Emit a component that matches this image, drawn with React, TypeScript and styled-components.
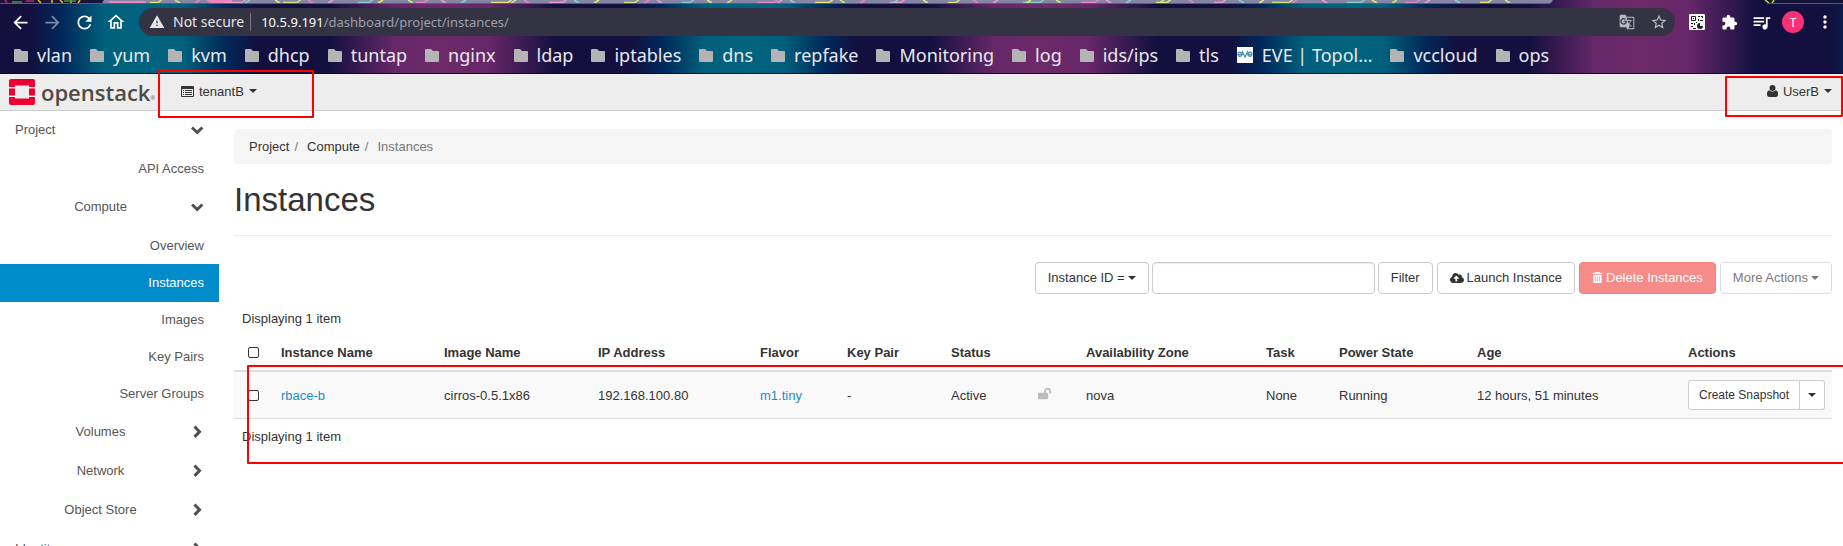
import React from 'react';
import styled, { createGlobalStyle, css } from 'styled-components';
import {
  MdArrowBack,
  MdArrowForward,
  MdRefresh,
  MdOutlineHome,
  MdWarning,
  MdGTranslate,
  MdStarBorder,
  MdExtension,
  MdQueueMusic,
  MdMoreVert,
} from 'react-icons/md';
import { FaTrashAlt, FaLockOpen, FaCloudUploadAlt } from 'react-icons/fa';

const GlobalStyle = createGlobalStyle`
  *, *::before, *::after { box-sizing: border-box; }
  body {
    margin: 0;
    background: #fff;
    color: #333;
    font: 13px/19px "Liberation Sans", Arial, sans-serif;
  }
  a { text-decoration: none; }
  button, input { font: inherit; }
`;

const Window = styled.div`
  display: flex;
  flex-direction: column;
  height: 100vh;
  overflow: hidden;
`;

/* ---------- browser frame ---------- */

const BrowserFrame = styled.div`
  flex: none;
  border-bottom: 1px solid #0c0a2c;
  background: repeating-linear-gradient(
    90deg,
    #13103f 0,
    #13103f 30px,
    #00285a 62px,
    #005f7c 104px,
    #00647f 150px,
    #005f7c 184px,
    #00285a 226px,
    #13103f 258px,
    #13103f 330px,
    #652768 394px,
    #6d2a68 440px,
    #652768 490px,
    #13103f 556px,
    #13103f 600px
  );
  font-family: "Noto Sans", "Open Sans", sans-serif;
`;

const WallpaperStrip = styled.svg`
  display: block;
  width: 100%;
  height: 4px;
`;

const Toolbar = styled.div`
  display: flex;
  align-items: center;
  height: 36px;
  padding: 0 2px 0 10px;
`;

const ToolButton = styled.button<{ $dim?: boolean }>`
  display: flex;
  align-items: center;
  justify-content: center;
  width: 32px;
  height: 28px;
  padding: 0;
  border: 0;
  background: none;
  color: ${(p) => (p.$dim ? '#7b87a8' : '#fff')};
`;

const NavButtons = styled.div`
  display: flex;
  width: 130px;
  margin-left: -6px;
`;

const AddressBar = styled.div`
  display: flex;
  flex: 1;
  align-items: center;
  height: 28px;
  margin-left: 5px;
  padding: 0 0 0 10px;
  border-radius: 14px;
  background: #333344;
  color: #e4e4e8;
`;

const Security = styled.span`
  display: flex;
  align-items: center;
  gap: 8px;
  padding-right: 6px;
  border-right: 1px solid #777785;
  font-size: 14px;
  line-height: 18px;
`;

const Url = styled.span`
  flex: 1;
  padding-left: 10px;
  color: #9f9fa9;
  font-size: 13px;

  b {
    color: #fff;
    font-weight: 400;
  }
`;

const AddressIcon = styled(ToolButton)`
  color: #b9b9c0;
`;

const Extensions = styled.div`
  display: flex;
  align-items: center;
  margin-left: 6px;
`;

const Avatar = styled.span`
  display: flex;
  align-items: center;
  justify-content: center;
  width: 22px;
  height: 22px;
  border-radius: 50%;
  background: #fc3077;
  font-size: 12px;
`;

const Bookmarks = styled.nav`
  display: flex;
  align-items: center;
  gap: 18px;
  height: 33px;
  padding: 0 14px 3px;
`;

const Bookmark = styled.a`
  display: flex;
  align-items: center;
  gap: 9px;
  color: #e9e9ee;
  font-size: 18px;
  line-height: 28px;
  white-space: nowrap;

  svg { flex: none; }
`;

/* ---------- dashboard header ---------- */

const Header = styled.header`
  display: flex;
  flex: none;
  align-items: center;
  height: 37px;
  border-bottom: 1px solid #ccc;
  background: #ededed;
`;

const Brand = styled.a`
  display: flex;
  align-items: center;
  gap: 6px;
  width: 158px;
  padding-left: 9px;
  color: #514b43;
  font: 600 22px/30px "Open Sans", "Noto Sans", sans-serif;
  white-space: nowrap;

  small {
    align-self: flex-end;
    margin-left: -6px;
    font: 6px/18px "Liberation Sans", sans-serif;
  }
`;

const Marked = styled.div`
  position: relative;
  display: flex;
  align-items: center;
  height: 36px;
  padding-bottom: 2px;
`;

const Outline = styled.div`
  position: absolute;
  z-index: 2;
  border: 2px solid #f00;
  border-radius: 1px;
  pointer-events: none;
`;

const TenantOutline = styled(Outline)`
  inset: -4px 0 -8px;
`;

const UserOutline = styled(Outline)`
  inset: 2px 0 -7px;
`;

const RowOutline = styled(Outline)`
  inset: 64px -13px -11px 13px;
`;

const MenuButton = styled.button`
  display: flex;
  align-items: center;
  gap: 5px;
  padding: 0;
  border: 0;
  background: none;
  color: #333;
  line-height: 19px;
`;

const TenantMenu = styled(Marked)`
  width: 156px;
  padding-left: 23px;
`;

const UserMenu = styled(Marked)`
  justify-content: flex-end;
  width: 118px;
  margin-left: auto;
  padding-right: 11px;
`;

const Caret = styled.span`
  display: inline-block;
  border: 4px solid transparent;
  border-top-color: currentColor;
  border-bottom: 0;
  vertical-align: middle;
`;

/* ---------- sidebar ---------- */

const Body = styled.div`
  display: flex;
  flex: 1;
  min-height: 0;
`;

const Sidebar = styled.nav`
  flex: none;
  width: 219px;
  overflow: hidden;
`;

const PanelHeading = styled.a<{ $nested?: boolean }>`
  display: flex;
  align-items: center;
  height: 39px;
  padding: 0 15px 2px;
  color: #555;

  span {
    flex: 1;
    ${(p) =>
      p.$nested &&
      css`
        padding-right: 5px;
        text-align: center;
      `}
  }
`;

const PanelList = styled.div`
  padding-bottom: 1px;
`;

const PanelItem = styled.a<{ $active?: boolean }>`
  display: flex;
  align-items: center;
  justify-content: flex-end;
  height: 37px;
  padding-right: 15px;
  color: #555;

  ${(p) =>
    p.$active &&
    css`
      background: #008bcb;
      box-shadow: 0 1px #008bcb;
      color: #fff;
    `}
`;

/* ---------- main content ---------- */

const Main = styled.main`
  flex: 1;
  min-width: 0;
  padding: 18px 11px 0 15px;
`;

const Breadcrumb = styled.nav`
  display: flex;
  align-items: center;
  height: 35px;
  padding: 0 15px;
  border-radius: 4px;
  background: #f5f5f5;
  color: #777;

  a { color: #333; }
  a::after {
    padding: 0 9px 0 5px;
    color: #777;
    content: "/";
  }
`;

const Title = styled.h1`
  margin: 0;
  padding: 18px 0 17px;
  border-bottom: 1px solid #eee;
  font-size: 33px;
  font-weight: 400;
  line-height: 36px;
`;

const Actions = styled.div`
  display: flex;
  justify-content: flex-end;
  gap: 4px;
  margin-top: 26px;
`;

const SearchGroup = styled.div`
  display: flex;
  gap: 3px;
`;

const Button = styled.button<{ $tone?: 'danger' }>`
  display: flex;
  align-items: center;
  gap: 3px;
  height: 32px;
  padding: 0 12px 1px;
  border: 1px solid #ccc;
  border-radius: 4px;
  background: #fff;
  color: #333;
  white-space: nowrap;

  &:disabled { opacity: 0.65; }

  ${(p) =>
    p.$tone === 'danger' &&
    css`
      border-color: #ef3e3b;
      background: #f2504d;
      color: #fff;
    `}
`;

const SearchInput = styled.input`
  width: 223px;
  height: 32px;
  padding: 0 12px;
  border: 1px solid #ccc;
  border-radius: 4px;
  background: #fff;
  box-shadow: inset 0 1px 1px rgba(0, 0, 0, 0.08);
`;

const TableBlock = styled.section`
  position: relative;
  margin-top: 7px;
`;

const Count = styled.p`
  margin: 0;
  padding: 8px 8px 7px;
`;

const Table = styled.table`
  width: 100%;
  border-bottom: 1px solid #ddd;
  border-collapse: separate;
  border-spacing: 0;
  table-layout: fixed;

  th, td {
    padding: 8px;
    text-align: left;
    vertical-align: middle;
    white-space: nowrap;
  }
  th { border-bottom: 2px solid #ddd; }
  td { background: #f9f9f9; }
  th:first-child, td:first-child { padding-left: 14px; }
  td a { color: #1a8ccb; }
`;

const Check = styled.input`
  display: block;
  width: 11px;
  height: 11px;
  margin: 0;
  border: 1px solid #333;
  border-radius: 2px;
  appearance: none;
  background: transparent;
`;

const SplitButton = styled.div`
  display: flex;
`;

const SmallButton = styled.button<{ $side: 'left' | 'right' }>`
  display: flex;
  align-items: center;
  height: 30px;
  padding: 0 ${(p) => (p.$side === 'left' ? 10 : 8)}px;
  border: 1px solid #ccc;
  border-left-width: ${(p) => (p.$side === 'left' ? 1 : 0)}px;
  border-radius: ${(p) => (p.$side === 'left' ? '3px 0 0 3px' : '0 3px 3px 0')};
  background: #fff;
  color: #333;
  font-size: 12px;
`;

/* ---------- drawings ---------- */

const FolderIcon = () => (
  <svg width="14" height="13" viewBox="0 0 14 13" fill="#b4b4b4" aria-hidden>
    <path d="M1 0h5l2 2h5a1 1 0 0 1 1 1v9a1 1 0 0 1-1 1H1a1 1 0 0 1-1-1V1a1 1 0 0 1 1-1z" />
  </svg>
);

const EveIcon = () => (
  <svg width="16" height="16" viewBox="0 0 16 16" fill="none" stroke="#4d92b0" strokeWidth="1.3" aria-hidden>
    <path fill="#fff" stroke="none" d="M0 0h16v16H0z" />
    <path d="M1.500 7.500h3C5 4.500 1 4 1 7.300c0 2.500 3 2.700 4 .7L5.500 5l2.500 5 2.500-5 .5 3c1 2 4 1.800 4-.7 0-3.300-4-2.800-3.500.2h3" />
  </svg>
);

const QrIcon = () => (
  <svg width="16" height="16" viewBox="0 0 16 16" aria-hidden>
    <rect width="16" height="16" rx="1" fill="#f4f4f4" />
    <g fill="none" stroke="#222" strokeWidth="1">
      <path d="M2.500 2.500h4v4h-4zM9 2.500h2M13.500 2v2M9.500 5v2M11 6.500h3M2 9.500h2M5.500 9v2M2 12.500h2M4 14.500h3" />
    </g>
    <path fill="#222" d="M4 4h1v1H4zM11 9v3h3a3 3 0 1 1-3-3zM12 2h1v1h-1zM7 8h1v1H7z" />
  </svg>
);

const ListIcon = () => (
  <svg width="13" height="11" viewBox="0 0 13 11" fill="#333" aria-hidden>
    <path fillRule="evenodd" d="M1 0h11a1 1 0 0 1 1 1v9a1 1 0 0 1-1 1H1a1 1 0 0 1-1-1V1a1 1 0 0 1 1-1zM1 3v7h11V3z" />
    <path d="M2 4h1v1H2zM4 4h7v1H4zM2 6h1v1H2zM4 6h7v1H4zM2 8h1v1H2zM4 8h7v1H4z" />
  </svg>
);

const UserIcon = () => (
  <svg width="11" height="12" viewBox="0 0 11 12" fill="#333" aria-hidden>
    <circle cx="5.500" cy="3" r="3" />
    <path d="M2.300 5.200C.6 5.400 0 7 0 9.500 0 11 .8 12 2.200 12h6.600c1.400 0 2.200-1 2.200-2.500 0-2.500-.6-4.100-2.300-4.300-1.700 1.700-4.700 1.700-6.400 0z" />
  </svg>
);

const OpenStackMark = () => (
  <svg width="26" height="26" viewBox="0 0 26 26" fill="#ee0031" aria-hidden>
    <path d="M2 0h22a2 2 0 0 1 2 2v6h-6V6.500H6V8H0V2a2 2 0 0 1 2-2zM0 9.500h6v7H0zM20 9.500h6v7h-6zM0 18h6v1.500h14V18h6v6a2 2 0 0 1-2 2H2a2 2 0 0 1-2-2z" />
  </svg>
);

const Chevron = ({ open }: { open?: boolean }) => (
  <svg width="13" height="13" viewBox="0 0 13 13" fill="none" stroke="#4c4f53" strokeWidth="3" aria-hidden>
    <path d={open ? 'M1 4.500l5.200 5L11.400 4.500' : 'M3.500 1.500l5 5.200-5 5.200'} />
  </svg>
);

const scribbleColors = ['#e8e86a', '#f27fc0', '#7fd8c4', '#c6ea7a', '#f59ac6'];

const Wallpaper = () => (
  <WallpaperStrip viewBox="0 0 1843 4" preserveAspectRatio="none" aria-hidden>
    <path fill="#1d123c" d="M0 0h106v3H0z" />
    <path fill="#8586a6" d="M104 0h1449l-2 3H102z" />
    <path fill="#ec85bb" d="M110 1h36v2h-38zM206 0h26v3h-22z" />
    <path fill="#151238" d="M1763 0h80v3h-78z" />
    <g fill="none" strokeWidth="1.500">
      {Array.from({ length: 62 }, (_, i) => {
        const x = 150 + i * 22 + ((i * 37) % 17);
        const color = scribbleColors[(i * 3) % 5];
        return i % 3 === 0 ? (
          <path key={i} stroke={color} d={`M${x} 2.500h${8 + (i % 4) * 3}l4-3`} />
        ) : (
          <path key={i} stroke={color} d={`M${x} 0l${i % 2 ? 5 : -5} 3`} />
        );
      })}
      <path stroke="#d8c61f" d="M38 0l3 3M52 0v3M60 0l3 3M71 0v3M80 0l-2 3" />
      <path stroke="#b8266f" d="M5 0l2 3M26 1h8" />
      <path stroke="#3f9b3a" d="M12 2h10M64 1h12" />
      <path stroke="#bddc2a" d="M1765 0l4 3M1774 0l-2 3" />
    </g>
    <path fill="#5c5c68" d="M0 3h1550v1H0zM1767 3h76v1h-76z" />
  </WallpaperStrip>
);

/* ---------- data ---------- */

const folders = [
  'vlan', 'yum', 'kvm', 'dhcp', 'tuntap', 'nginx', 'ldap', 'iptables', 'dns',
  'repfake', 'Monitoring', 'log', 'ids/ips', 'tls', 'EVE | Topol…', 'vccloud', 'ops',
];

const columns = [
  { label: '', width: 39 },
  { label: 'Instance Name', width: 163 },
  { label: 'Image Name', width: 154 },
  { label: 'IP Address', width: 162 },
  { label: 'Flavor', width: 87 },
  { label: 'Key Pair', width: 104 },
  { label: 'Status', width: 87 },
  { label: '', width: 48 },
  { label: 'Availability Zone', width: 180 },
  { label: 'Task', width: 73 },
  { label: 'Power State', width: 138 },
  { label: 'Age', width: 211 },
  { label: 'Actions', width: 152 },
];

const computeItems = ['Overview', 'Instances', 'Images', 'Key Pairs', 'Server Groups'];

export default function App() {
  return (
    <Window>
      <GlobalStyle />
      <BrowserFrame>
        <Wallpaper />
        <Toolbar>
          <NavButtons>
            <ToolButton aria-label="Back"><MdArrowBack size={21} /></ToolButton>
            <ToolButton aria-label="Forward" $dim><MdArrowForward size={21} /></ToolButton>
            <ToolButton aria-label="Reload"><MdRefresh size={21} /></ToolButton>
            <ToolButton aria-label="Home"><MdOutlineHome size={20} /></ToolButton>
          </NavButtons>
          <AddressBar>
            <Security><MdWarning size={16} />Not secure</Security>
            <Url><b>10.5.9.191</b>/dashboard/project/instances/</Url>
            <AddressIcon aria-label="Translate"><MdGTranslate size={16} /></AddressIcon>
            <AddressIcon aria-label="Bookmark this page"><MdStarBorder size={18} /></AddressIcon>
          </AddressBar>
          <Extensions>
            <ToolButton aria-label="QR code"><QrIcon /></ToolButton>
            <ToolButton aria-label="Extensions"><MdExtension size={17} /></ToolButton>
            <ToolButton aria-label="Media"><MdQueueMusic size={21} /></ToolButton>
            <ToolButton aria-label="Profile"><Avatar>T</Avatar></ToolButton>
            <ToolButton aria-label="Menu"><MdMoreVert size={20} /></ToolButton>
          </Extensions>
        </Toolbar>
        <Bookmarks>
          {folders.map((name) => (
            <Bookmark href="#" key={name}>
              {name.startsWith('EVE') ? <EveIcon /> : <FolderIcon />}
              {name}
            </Bookmark>
          ))}
        </Bookmarks>
      </BrowserFrame>

      <Header>
        <Brand href="#"><OpenStackMark />openstack<small>®</small></Brand>
        <TenantMenu>
          <MenuButton><ListIcon />tenantB<Caret /></MenuButton>
          <TenantOutline />
        </TenantMenu>
        <UserMenu>
          <MenuButton><UserIcon />UserB<Caret /></MenuButton>
          <UserOutline />
        </UserMenu>
      </Header>

      <Body>
        <Sidebar>
          <PanelHeading href="#"><span>Project</span><Chevron open /></PanelHeading>
          <PanelList><PanelItem href="#">API Access</PanelItem></PanelList>
          <PanelHeading href="#" $nested><span>Compute</span><Chevron open /></PanelHeading>
          <PanelList>
            {computeItems.map((item) => (
              <PanelItem href="#" key={item} $active={item === 'Instances'}>{item}</PanelItem>
            ))}
          </PanelList>
          {['Volumes', 'Network', 'Object Store'].map((item) => (
            <PanelHeading href="#" key={item} $nested><span>{item}</span><Chevron /></PanelHeading>
          ))}
          <PanelHeading href="#"><span>Identity</span><Chevron /></PanelHeading>
        </Sidebar>

        <Main>
          <Breadcrumb>
            <a href="#">Project</a>
            <a href="#">Compute</a>
            <span>Instances</span>
          </Breadcrumb>
          <Title>Instances</Title>

          <Actions>
            <SearchGroup>
              <Button>Instance ID = <Caret /></Button>
              <SearchInput type="text" aria-label="Filter value" />
              <Button>Filter</Button>
            </SearchGroup>
            <Button><FaCloudUploadAlt size={14} />Launch Instance</Button>
            <Button $tone="danger" disabled><FaTrashAlt size={11} />Delete Instances</Button>
            <Button disabled>More Actions <Caret /></Button>
          </Actions>

          <TableBlock>
            <Count>Displaying 1 item</Count>
            <Table>
              <colgroup>
                {columns.map((c, i) => <col key={i} width={c.width} />)}
              </colgroup>
              <thead>
                <tr>
                  {columns.map((c, i) => (
                    <th key={i}>{i === 0 ? <Check type="checkbox" aria-label="Select all" /> : c.label}</th>
                  ))}
                </tr>
              </thead>
              <tbody>
                <tr>
                  <td><Check type="checkbox" aria-label="Select rbace-b" /></td>
                  <td><a href="#">rbace-b</a></td>
                  <td>cirros-0.5.1x86</td>
                  <td>192.168.100.80</td>
                  <td><a href="#">m1.tiny</a></td>
                  <td>-</td>
                  <td>Active</td>
                  <td><FaLockOpen size={13} color="#bbb" /></td>
                  <td>nova</td>
                  <td>None</td>
                  <td>Running</td>
                  <td>12 hours, 51 minutes</td>
                  <td>
                    <SplitButton>
                      <SmallButton $side="left">Create Snapshot</SmallButton>
                      <SmallButton $side="right" aria-label="More actions"><Caret /></SmallButton>
                    </SplitButton>
                  </td>
                </tr>
              </tbody>
            </Table>
            <Count>Displaying 1 item</Count>
            <RowOutline />
          </TableBlock>
        </Main>
      </Body>
    </Window>
  );
}
